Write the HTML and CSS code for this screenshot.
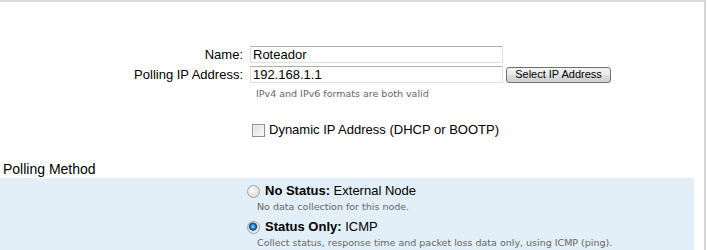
FILE: index.html
```html
<!DOCTYPE html>
<html>
<head>
    <title>Add Node</title>
    <link rel="stylesheet" href="styles.css">
</head>
<body>
    <div class="page">

        <!-- Node identity -->
        <div class="fields">
            <label class="lbl" for="name">Name:</label>
            <div class="ctl">
                <input class="txt" id="name" type="text" value="Roteador">
            </div>

            <label class="lbl" for="ip">Polling IP Address:</label>
            <div class="ctl">
                <input class="txt" id="ip" type="text" value="192.168.1.1">
                <button class="btn" type="button">Select IP Address</button>
                <div class="hint">IPv4 and IPv6 formats are both valid</div>
            </div>
        </div>

        <div class="dynamic">
            <label><input class="check" type="checkbox">Dynamic IP Address (DHCP or BOOTP)</label>
        </div>

        <div class="section-title">Polling Method</div>

        <div class="band">
            <div class="option">
                <label class="opt-title"><input class="radio" type="radio" name="method"><b>No Status:</b> External Node</label>
                <div class="desc">No data collection for this node.</div>
            </div>
            <div class="option">
                <label class="opt-title"><input class="radio" type="radio" name="method" checked><b>Status Only:</b> ICMP</label>
                <div class="desc">Collect status, response time and packet loss data only, using ICMP (ping).</div>
            </div>
        </div>
    </div>
</body>
</html>
```
FILE: styles.css
```css
body {
    margin: 0;
    padding: 0;
    font-family: "Liberation Sans", Arial, sans-serif;
    font-size: 13px;
    color: #000;
    background: #fff;
}

.page {
    width: 704px;
    border-top: 2px solid #dcdcdc;
    border-right: 2px solid #d6d6d6;
    padding-top: 44px;
    min-height: 300px;
}

.fields {
    display: grid;
    grid-template-columns: 243px auto;
    column-gap: 7px;
    row-gap: 3px;
    align-items: start;
}

.lbl {
    text-align: right;
    line-height: 17px;
}

.ctl {
    display: flex;
    flex-wrap: wrap;
    align-items: center;
}

.txt {
    box-sizing: border-box;
    width: 253px;
    height: 17px;
    margin: 0;
    padding: 0 2px;
    border: 1px solid #dbdfe6;
    border-top-color: #abadb3;
    font-family: "Liberation Sans", Arial, sans-serif;
    font-size: 13px;
    color: #000;
    outline: none;
}

.btn {
    box-sizing: border-box;
    width: 105px;
    height: 16px;
    margin-left: 3px;
    padding: 0;
    border: 1px solid #707070;
    border-radius: 3px;
    background: linear-gradient(#f2f2f2 0%, #ebebeb 48%, #dddddd 52%, #cfcfcf 100%);
    font-family: "Liberation Sans", Arial, sans-serif;
    font-size: 11px;
    line-height: 13px;
    color: #000;
}

.hint {
    width: 100%;
    padding-left: 6px;
    margin-top: 5px;
    font-family: "DejaVu Sans", Verdana, sans-serif;
    font-size: 9.5px;
    line-height: 12px;
    color: #666;
}

.dynamic {
    padding-left: 252px;
    margin-top: 22px;
    line-height: 16px;
}

.dynamic label {
    display: flex;
    align-items: center;
}

.check {
    appearance: none;
    -webkit-appearance: none;
    box-sizing: border-box;
    width: 13px;
    height: 13px;
    margin: 0 4px 0 0;
    border: 1px solid #8f8f8f;
    background: linear-gradient(135deg, #dcdcdc, #fbfbfb);
    box-shadow: inset 0 0 0 1px #f4f4f4;
}

.section-title {
    margin-top: 23px;
    padding-left: 3px;
    font-size: 14px;
    line-height: 16px;
}

.band {
    margin-top: 1px;
    margin-right: 10px;
    padding: 5px 0 20px 247px;
    background: #e2eff8;
}

.option {
    margin-bottom: 6px;
}

.opt-title {
    display: flex;
    align-items: center;
    line-height: 16px;
    white-space: pre;
}

.radio {
    appearance: none;
    -webkit-appearance: none;
    box-sizing: border-box;
    width: 13px;
    height: 13px;
    margin: 0 5px 0 0;
    border: 1px solid #a2a2a2;
    border-radius: 50%;
    background: radial-gradient(circle at 40% 35%, #fafafa 0%, #e2e2e2 60%, #cfcfcf 100%);
}

.radio:checked {
    background: radial-gradient(circle at 45% 42%, #9fdcff 0%, #2d8bd0 22%, #0e3f70 42%, #dcdcdc 50%, #eeeeee 70%, #cfcfcf 100%);
}

.desc {
    margin-top: 2px;
    padding-left: 10px;
    font-family: "DejaVu Sans", Verdana, sans-serif;
    font-size: 9.5px;
    line-height: 12px;
    color: #666;
}
```
